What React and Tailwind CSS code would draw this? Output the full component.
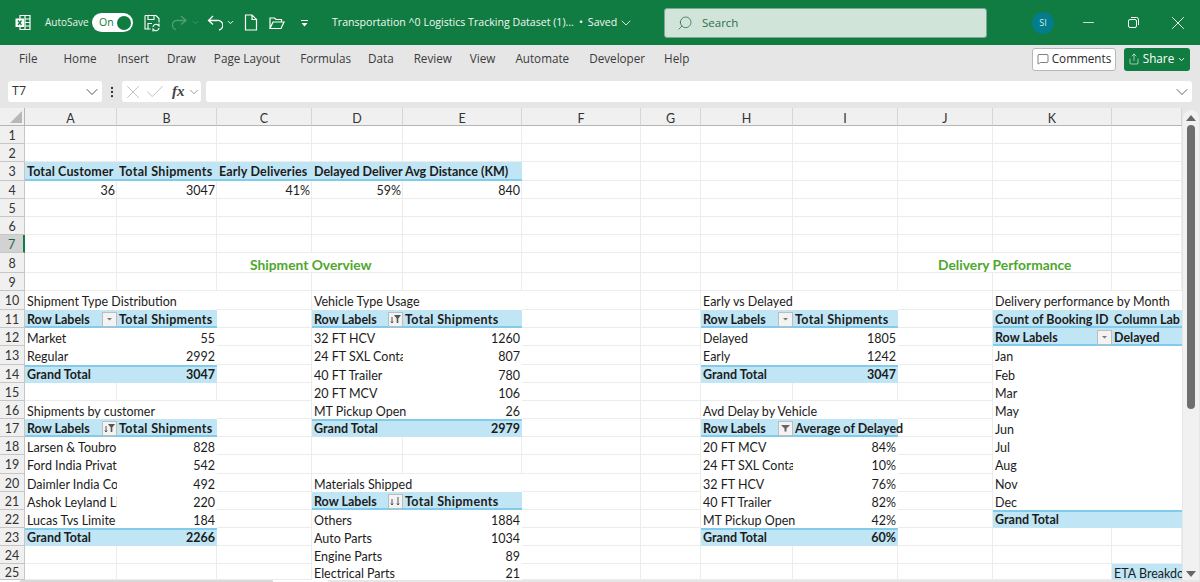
import React from 'react';
import { ChevronDown, X, Check, Search, Minus, MessageSquare, Share, MoreVertical } from 'lucide-react';

const colWidths = [92, 100, 95, 91, 119, 119, 60, 92, 105, 95, 119, 70];
const colLetters = ['A', 'B', 'C', 'D', 'E', 'F', 'G', 'H', 'I', 'J', 'K', ''];
const rowHeights = [18, 18, 19, 18, 18, 18, 18, 20, 18, 19, 18, 18, 19, 18, 18, 18, 18, 18, 19, 18, 18, 18, 18, 18, 16];

// cell kinds: white = pivot body, blue = pivot header, fill = blue without rule, total = grand total band, none = plain grid cell
const t = (text, extra = {}) => ({ text, kind: 'white', ...extra });
const n = (text) => ({ text, kind: 'white', right: true });
const h = (text, extra = {}) => ({ text, kind: 'blue', bold: true, ...extra });
const hl = (btn) => ({ text: 'Row Labels', kind: 'blue', bold: true, btn });
const ts = () => h('Total Shipments', { wide: true });
const g = (text, right) => ({ text, kind: 'total', bold: true, right });
const v = (text) => ({ text, right: true });
const blank = { kind: 'white' };

const pair = (col, a, b) => ({ [col]: a, [col + 1]: b });

const rows = {
  3: {
    0: h('Total Customer', { semi: true }), 1: ts(), 2: h('Early Deliveries', { semi: true }),
    3: h('Delayed Deliver', { clip: true }), 4: h('Avg Distance (KM)'),
  },
  4: { 0: v('36'), 1: v('3047'), 2: v('41%'), 3: v('59%'), 4: v('840') },
  8: {
    2: { text: 'Shipment Overview', green: true, pad: 'pl-[33px]', noRight: true },
    9: { text: 'Delivery Performance', green: true, pad: 'pl-[40px]', noRight: true },
  },
  10: {
    ...pair(0, t('Shipment Type Distribution'), blank), ...pair(3, t('Vehicle Type Usage'), blank),
    ...pair(7, t('Early vs Delayed'), blank), ...pair(10, t('Delivery performance by Month'), blank),
  },
  11: {
    ...pair(0, hl('menu'), ts()), ...pair(3, hl('sort'), ts()),
    ...pair(7, hl('menu'), ts()), ...pair(10, h('Count of Booking ID'), h('Column Lab', { clip: true })),
  },
  12: {
    ...pair(0, t('Market'), n('55')), ...pair(3, t('32 FT HCV'), n('1260')),
    ...pair(7, t('Delayed'), n('1805')), ...pair(10, hl('menu'), h('Delayed')),
  },
  13: {
    ...pair(0, t('Regular'), n('2992')), ...pair(3, t('24 FT SXL Conta', { clip: true }), n('807')),
    ...pair(7, t('Early'), n('1242')), ...pair(10, t('Jan'), blank),
  },
  14: {
    ...pair(0, g('Grand Total'), g('3047', true)), ...pair(3, t('40 FT Trailer'), n('780')),
    ...pair(7, g('Grand Total'), g('3047', true)), ...pair(10, t('Feb'), blank),
  },
  15: { ...pair(3, t('20 FT MCV'), n('106')), ...pair(10, t('Mar'), blank) },
  16: {
    ...pair(0, t('Shipments by customer'), blank), ...pair(3, t('MT Pickup Open'), n('26')),
    ...pair(7, t('Avd Delay by Vehicle'), blank), ...pair(10, t('May'), blank),
  },
  17: {
    ...pair(0, hl('sort'), ts()), ...pair(3, g('Grand Total'), g('2979', true)),
    ...pair(7, hl('filter'), h('Average of Delayed')), ...pair(10, t('Jun'), blank),
  },
  18: {
    ...pair(0, t('Larsen & Toubro', { clip: true }), n('828')),
    ...pair(7, t('20 FT MCV'), n('84%')), ...pair(10, t('Jul'), blank),
  },
  19: {
    ...pair(0, t('Ford India Privat', { clip: true }), n('542')),
    ...pair(7, t('24 FT SXL Conta', { clip: true }), n('10%')), ...pair(10, t('Aug'), blank),
  },
  20: {
    ...pair(0, t('Daimler India Co', { clip: true }), n('492')), ...pair(3, t('Materials Shipped'), blank),
    ...pair(7, t('32 FT HCV'), n('76%')), ...pair(10, t('Nov'), blank),
  },
  21: {
    ...pair(0, t('Ashok Leyland Li', { clip: true }), n('220')), ...pair(3, hl('desc'), ts()),
    ...pair(7, t('40 FT Trailer'), n('82%')), ...pair(10, t('Dec'), blank),
  },
  22: {
    ...pair(0, t('Lucas Tvs Limite', { clip: true }), n('184')), ...pair(3, t('Others'), n('1884')),
    ...pair(7, t('MT Pickup Open'), n('42%')), ...pair(10, g('Grand Total'), g('')),
  },
  23: {
    ...pair(0, g('Grand Total'), g('2266', true)), ...pair(3, t('Auto Parts'), n('1034')),
    ...pair(7, g('Grand Total'), g('60%', true)),
  },
  24: { ...pair(3, t('Engine Parts'), n('89')) },
  25: { ...pair(3, t('Electrical Parts'), n('21')), 11: { text: 'ETA Breakdo', kind: 'fill', clip: true } },
};

function PivotButton({ type }) {
  return (
    <span className="absolute right-0 top-[2px] z-20 flex h-[15px] w-[15px] items-center justify-center border border-[#bdbdbd] bg-[#f3f3f3]">
      <svg width="13" height="11" viewBox="0 0 13 11">
        {type === 'menu' && <path d="M4 4h5L6.500 6.500z" fill="#777" />}
        {(type === 'sort' || type === 'desc') && (
          <path d="M3 3v6M1.800 7.500 3 9l1.200-1.500" stroke="#555" strokeWidth="1" fill="none" />
        )}
        {type === 'sort' && <path d="M5 1h7L9.300 4.500V9H7.700V4.500z" fill="#555" />}
        {type === 'filter' && <path d="M2 2h9L7.500 5.500V8.500H5.500V5.500z" fill="#666" />}
        {type === 'desc' && <path d="M9 1v8M7.800 7.500 9 9l1.200-1.500" stroke="#555" strokeWidth="1" fill="none" />}
      </svg>
    </span>
  );
}

function Cell({ width, cell }) {
  const kind = cell?.kind;

  let cls = 'relative shrink-0 whitespace-nowrap px-[2px] leading-none flex items-center text-[#1c1c1c]';
  cls += cell?.green ? ' text-[13.8px] font-bold text-[#4ea72e]' : ' text-[12.5px]';
  if (kind === 'white') cls += ' bg-white pt-[4px]';
  if (kind === 'blue') cls += ' bg-[#c0e6f5] border-b-2 border-[#83cbeb] pt-[4px]';
  if (kind === 'fill') cls += ' bg-[#c0e6f5] pt-[4px]';
  if (kind === 'total') cls += ' bg-[#c0e6f5] border-t-2 border-[#83cbeb]';
  if (!kind) cls += ' border-b border-[#ececec] pt-[4px] pr-[1px]';
  if (!kind && !cell?.noRight) cls += ' border-r';
  if (cell?.right) cls += ' justify-end';
  if (cell?.bold) cls += ' font-bold';
  if (cell?.wide) cls += ' tracking-[0.33px]';
  if (cell?.semi) cls += ' tracking-[0.15px]';
  if (cell?.pad) cls += ' ' + cell.pad;
  if (cell?.clip) cls += ' overflow-hidden';

  return (
    <div className={cls} style={{ width }}>
      {cell?.text && <span className="relative z-10">{cell.text}</span>}
      {cell?.btn && <PivotButton type={cell.btn} />}
    </div>
  );
}

function SheetRow({ num, height }) {
  const row = rows[num] || {};
  const active = num === 7;
  return (
    <div className="flex" style={{ height }}>
      <div
        className={`flex w-[25px] shrink-0 items-center justify-center border-b pt-[3px] text-[12.5px] leading-none ${
          active
            ? 'border-r-2 border-b-[#c6c6c6] border-r-[#107c41] bg-[#d2d2d2] text-[#0e6b3a]'
            : 'border-r border-[#c6c6c6] bg-[#f0f0f0] text-[#333]'
        }`}
      >
        {num}
      </div>
      {colWidths.map((w, i) => (
        <Cell key={i} width={w} cell={row[i]} />
      ))}
    </div>
  );
}

function ExcelLogo() {
  return (
    <svg width="16" height="17" viewBox="0 0 16 17" fill="none" stroke="white" strokeWidth="1.2">
      <path d="M5 1.500h10v14H5z" />
      <path d="M10 1.500v14M10 5h5M10 8.500h5M10 12h5" />
      <rect x="0.500" y="4.500" width="8.500" height="8.500" fill="white" stroke="none" />
      <path d="M3 6.500l3.500 4.500M6.500 6.500L3 11" stroke="#107c41" strokeWidth="1.300" />
    </svg>
  );
}

function TitleBar() {
  return (
    <div className="flex h-[45px] items-center bg-[#107c41] text-white">
      <div className="ml-[15px] w-[16px]"><ExcelLogo /></div>
      <span className="ml-[14px] w-[42px] whitespace-nowrap text-[10px] text-[#e8f3ec]">AutoSave</span>
      <div className="ml-[5px] flex h-[19px] w-[41px] items-center justify-between rounded-full bg-white pl-[7px] pr-[2px]">
        <span className="text-[10.5px] leading-none text-[#107c41]">On</span>
        <span className="h-[14px] w-[14px] rounded-full bg-[#107c41]" />
      </div>
      <svg className="ml-[11px]" width="16" height="18" viewBox="0 0 16 18" fill="none" stroke="white" strokeWidth="1.100">
        <path d="M1 1.500h11l3 3v4M1 1.500V15h5.500M4 1.500v4h6v-4M4 15V9.500h4" />
        <path d="M9 13a3 3 0 0 1 5-2l1 1V9.500M15 14a3 3 0 0 1-5 2l-1-1v2.500" />
      </svg>
      <svg className="ml-[12px]" width="16" height="18" viewBox="0 0 16 18" fill="none" stroke="#4f9f78" strokeWidth="1.300">
        <path d="M9 2l5 4.500L9 10.500M14 6.500H6a4.500 4.500 0 0 0-2 9" />
      </svg>
      <ChevronDown className="ml-[3px] text-[#4f9f78]" size={9} strokeWidth={2} />
      <svg className="ml-[7px]" width="16" height="18" viewBox="0 0 16 18" fill="none" stroke="white" strokeWidth="1.300">
        <path d="M6 2L1.500 6.500l4.500 4M1.500 6.500H10a4.500 4.500 0 0 1 2 9.500" />
      </svg>
      <ChevronDown className="ml-[3px]" size={9} strokeWidth={2.5} />
      <svg className="ml-[9px]" width="14" height="17" viewBox="0 0 14 17" fill="none" stroke="white" strokeWidth="1.200">
        <path d="M1.500 1h6.500l4.500 4.500V16H1.500zM8 1v4.500h4.500" />
      </svg>
      <svg className="ml-[11px]" width="16" height="14" viewBox="0 0 16 14" fill="none" stroke="white" strokeWidth="1.200">
        <path d="M1 12.500V2h4.500l1.500 1.500h5.500v2.500M1 12.500h11l3-6.500H4z" />
      </svg>
      <svg className="ml-[16px]" width="8" height="8" viewBox="0 0 8 8" fill="white">
        <path d="M0 1h7v1H0zM.5 4h6L3.500 7.500z" />
      </svg>
      <span className="ml-[23px] flex w-[332px] items-center whitespace-nowrap text-[10.6px] text-[#f2f8f4]">
        Transportation ^0 Logistics Tracking Dataset (1)...
        <span className="mx-[5px]">•</span>
        Saved
        <ChevronDown className="ml-[1px]" size={16} strokeWidth={1.3} />
      </span>
      <div className="flex h-[30px] w-[323px] items-center rounded-[3px] border border-[#7fa98f] bg-[#d0e4da] pl-[12px] text-[#2e6f4e]">
        <Search className="-scale-x-100" size={16} strokeWidth={1.2} />
        <span className="ml-[9px] text-[11.5px]">Search</span>
      </div>
      <div className="ml-[45px] flex h-[22px] w-[22px] items-center justify-center rounded-full bg-[#037c8c] text-[9px] text-[#cfe6ea]">SI</div>
      <Minus className="ml-[26px]" size={17} strokeWidth={1.1} />
      <svg className="ml-[31px]" width="11" height="11" viewBox="0 0 11 11" fill="none" stroke="white" strokeWidth="1">
        <rect x=".5" y="2.500" width="8" height="8" rx="1.500" />
        <path d="M3 .5h5.500a2 2 0 0 1 2 2V8" />
      </svg>
      <X className="ml-[28px]" size={22} strokeWidth={1} />
    </div>
  );
}

const tabs = [
  ['File', 19], ['Home', 26], ['Insert', 21], ['Draw', 18], ['Page Layout', 18], ['Formulas', 20],
  ['Data', 17], ['Review', 20], ['View', 18], ['Automate', 20], ['Developer', 20], ['Help', 19],
];

function Ribbon() {
  return (
    <div className="flex h-[28px] items-center bg-[#e6e6e6] text-[11.7px] text-[#3b3b3b] shadow-[0_1px_1px_#cfcfcf]">
      {tabs.map(([name, left]) => (
        <span key={name} style={{ marginLeft: left }}>{name}</span>
      ))}
      <div className="ml-auto mr-[8px] flex h-[23px] w-[84px] items-center justify-center gap-[3px] rounded-[3px] border border-[#b8b8b8] bg-white text-[#2b2b2b]">
        <MessageSquare size={12} strokeWidth={1.2} />
        <span>Comments</span>
      </div>
      <div className="mr-[10px] flex h-[23px] w-[66px] items-center justify-center gap-[3px] rounded-[3px] bg-[#107c41] text-white">
        <Share size={12} strokeWidth={1.2} />
        <span>Share</span>
        <ChevronDown size={9} strokeWidth={2.5} />
      </div>
    </div>
  );
}

function FormulaBar() {
  return (
    <div className="flex h-[35px] items-center bg-[#e6e6e6] pt-[2px] text-[#333]">
      <div className="ml-[8px] flex h-[21px] w-[94px] items-center justify-between rounded-[3px] bg-white pl-[4px] text-[12.5px]">
        T7
        <ChevronDown size={20} strokeWidth={1} />
      </div>
      <MoreVertical className="ml-[3px]" size={14} strokeWidth={2} />
      <div className="ml-[3px] flex h-[21px] w-[79px] items-center rounded-[3px] bg-white text-[#b5b5b5]">
        <X size={22} strokeWidth={0.9} />
        <Check size={22} strokeWidth={0.9} />
        <span className="ml-[6px] font-['Liberation_Serif',serif] text-[15px] font-bold italic text-[#444]">fx</span>
        <ChevronDown className="ml-[2px] text-[#777]" size={14} strokeWidth={1.2} />
      </div>
      <div className="ml-[5px] mr-[8px] flex h-[21px] flex-1 items-center justify-end rounded-[3px] bg-white">
        <ChevronDown className="text-[#444]" size={20} strokeWidth={1} />
      </div>
    </div>
  );
}

function ColumnHeaders() {
  return (
    <div className="flex h-[18px]">
      <div className="flex w-[25px] shrink-0 items-end justify-end border-b border-r border-[#b5b5b5] bg-[#f0f0f0] pb-[2px] pr-[2px]">
        <span className="h-0 w-0 border-b-[12px] border-l-[12px] border-b-[#b8b8b8] border-l-transparent" />
      </div>
      {colWidths.map((w, i) => (
        <div
          key={i}
          style={{ width: w }}
          className="flex shrink-0 items-center justify-center border-b border-r border-[#b5b5b5] border-r-[#d6d6d6] bg-[#f0f0f0] pt-[5px] text-[12.5px] leading-none text-[#333]"
        >
          {colLetters[i]}
        </div>
      ))}
    </div>
  );
}

function Scrollbar() {
  return (
    <div className="flex w-[18px] shrink-0 flex-col items-center bg-[#e6e6e6] px-[1px] pt-[2px]">
      <div className="flex h-full w-full flex-col items-center rounded-t-full bg-[#f1f1f1] pt-[5px]">
        <span className="h-0 w-0 border-x-[5px] border-b-[6px] border-x-transparent border-b-[#666]" />
        <div className="mt-[4px] h-[284px] w-[8px] rounded-full bg-[#6e6e6e]" />
        <span className="mb-[3px] mt-auto h-0 w-0 border-x-[5px] border-t-[6px] border-x-transparent border-t-[#666]" />
      </div>
    </div>
  );
}

function BottomEdge() {
  return (
    <div className="flex h-[2px] shrink-0 bg-[#e6e6e6]">
      <div className="w-[20px] bg-white" />
      <div className="w-[253px] rounded-t-full bg-[#d9d9d9]" />
      <div className="w-[55px] bg-white" />
    </div>
  );
}

export default function App() {
  return (
    <div className="flex h-[582px] w-[1200px] flex-col overflow-hidden bg-white font-['Lato','Liberation_Sans',sans-serif]">
      <div className="font-['Open_Sans','Liberation_Sans',sans-serif]">
        <TitleBar />
        <Ribbon />
        <FormulaBar />
      </div>
      <div className="flex min-h-0 flex-1">
        <div className="min-w-0 flex-1 overflow-hidden">
          <ColumnHeaders />
          {rowHeights.map((height, i) => (
            <SheetRow key={i} num={i + 1} height={height} />
          ))}
        </div>
        <Scrollbar />
      </div>
      <BottomEdge />
    </div>
  );
}
